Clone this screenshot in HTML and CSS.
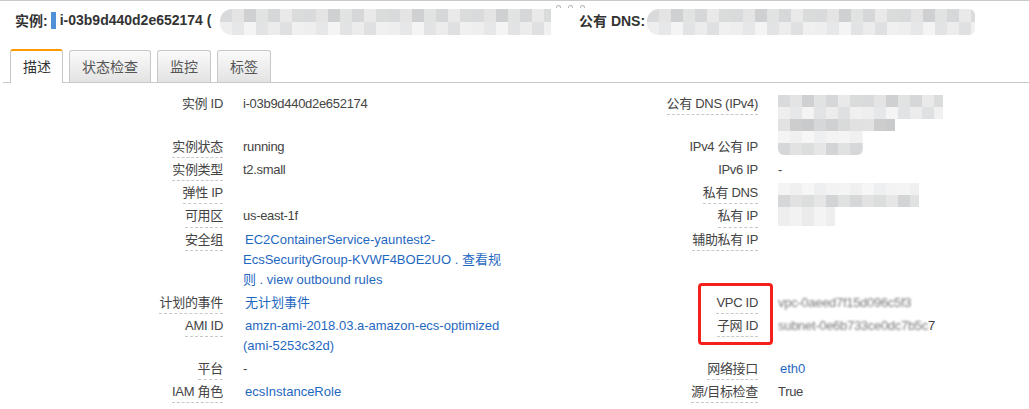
FILE: index.html
```html
<!DOCTYPE html>
<html lang="zh">
<head>
<meta charset="utf-8">
<title>实例详情</title>
<link rel="stylesheet" href="styles.css">
</head>
<body>
<div class="page">
  <header class="topbar">
    <div class="hdr-left">
      <span class="hdr-label">实例:</span>
      <span class="mark"></span>
      <span class="hdr-val">i-03b9d440d2e652174 (</span>
    </div>
    <div class="hdr-right">
      <span class="hdr-label">公有 DNS:</span>
    </div>
  </header>

  <nav class="tabs">
    <div class="tab active">描述</div>
    <div class="tab">状态检查</div>
    <div class="tab">监控</div>
    <div class="tab">标签</div>
  </nav>

  <section class="details">
    <div class="k"><span class="lbl plain">实例 ID</span></div>
    <div class="v">i-03b9d440d2e652174</div>
    <div class="k"><span class="lbl">公有 DNS (IPv4)</span></div>
    <div class="v two-line"></div>

    <div class="k"><span class="lbl">实例状态</span></div>
    <div class="v">running</div>
    <div class="k"><span class="lbl plain">IPv4 公有 IP</span></div>
    <div class="v"></div>

    <div class="k"><span class="lbl">实例类型</span></div>
    <div class="v">t2.small</div>
    <div class="k"><span class="lbl plain">IPv6 IP</span></div>
    <div class="v">-</div>

    <div class="k"><span class="lbl">弹性 IP</span></div>
    <div class="v"></div>
    <div class="k"><span class="lbl">私有 DNS</span></div>
    <div class="v"></div>

    <div class="k"><span class="lbl">可用区</span></div>
    <div class="v">us-east-1f</div>
    <div class="k"><span class="lbl">私有 IP</span></div>
    <div class="v"></div>

    <div class="k"><span class="lbl">安全组</span></div>
    <div class="v"><a class="lnk" href="#">EC2ContainerService-yauntest2-EcsSecurityGroup-KVWF4BOE2UO . 查看规则 . view outbound rules</a></div>
    <div class="k"><span class="lbl">辅助私有 IP</span></div>
    <div class="v"></div>

    <div class="k"><span class="lbl">计划的事件</span></div>
    <div class="v"><a class="lnk" href="#">无计划事件</a></div>
    <div class="k"><span class="lbl">VPC ID</span></div>
    <div class="v"><span class="smudge">vpc-0aeed7f15d096c5f3</span></div>

    <div class="k"><span class="lbl">AMI ID</span></div>
    <div class="v"><a class="lnk" href="#">amzn-ami-2018.03.a-amazon-ecs-optimized (ami-5253c32d)</a></div>
    <div class="k"><span class="lbl">子网 ID</span></div>
    <div class="v"><span class="smudge">subnet-0e6b733ce0dc7b5c</span>7</div>

    <div class="k"><span class="lbl">平台</span></div>
    <div class="v">-</div>
    <div class="k"><span class="lbl">网络接口</span></div>
    <div class="v"><a class="lnk" href="#">eth0</a></div>

    <div class="k"><span class="lbl">IAM 角色</span></div>
    <div class="v"><a class="lnk" href="#">ecsInstanceRole</a></div>
    <div class="k"><span class="lbl">源/目标检查</span></div>
    <div class="v">True</div>
  </section>

  <!-- obscured values and annotation overlays -->
  <div class="mosaic m-dl hdr-blur-1"></div>
  <div class="mosaic m-dl hdr-blur-2"></div>
  <div class="dots"><i></i><i></i><i></i></div>
  <div class="mosaic m-dl dns-a"></div>
  <div class="mosaic m-d dns-b"></div>
  <div class="mosaic m-ld ip-a"></div>
  <div class="mosaic m-ld pdns"></div>
  <div class="mosaic m-l pip"></div>
  <div class="annot"></div>
</div>
</body>
</html>
```

FILE: styles.css
```css
html, body {
  margin: 0;
  padding: 0;
  background: #fff;
  overflow: hidden;
}

body {
  font-family: "Liberation Sans", Arial, "Noto Sans CJK SC", sans-serif;
  color: #444;
}

.page {
  position: relative;
  width: 1029px;
  height: 409px;
  border-top: 1px solid #c9c9c9;
  box-sizing: border-box;
}

/* ---------- header ---------- */
.topbar {
  display: flex;
  align-items: center;
  height: 38px;
  font-size: 14px;
  font-weight: bold;
  color: #333;
}

.hdr-left {
  display: flex;
  align-items: center;
  width: 564px;
  padding-left: 15px;
  box-sizing: content-box;
}

.mark {
  display: inline-block;
  width: 5px;
  height: 17px;
  background: #4f90d6;
  margin-left: 3px;
  margin-right: 4px;
}

/* ---------- tabs ---------- */
.tabs {
  display: flex;
  align-items: flex-end;
  gap: 6px;
  margin: 10px 0 0 3px;
  padding-left: 7px;
  border-bottom: 1px solid #c9c9c9;
  height: 33px;
}

.tab {
  height: 32px;
  box-sizing: border-box;
  padding: 0 12px;
  border: 1px solid #c8c8c8;
  border-bottom: none;
  border-radius: 3px 3px 0 0;
  background: linear-gradient(#fafafa, #e3e3e3);
  font-size: 14px;
  line-height: 31px;
  color: #555;
  font-family: "Noto Sans CJK SC", "Liberation Sans", sans-serif;
}

.tab.active {
  height: 34px;
  margin-bottom: -1px;
  border-top: 2px solid #f90;
  background: #fff;
  color: #333;
  padding: 0 11px 0 12px;
  line-height: 31px;
}

/* ---------- detail grid ---------- */
.details {
  display: grid;
  grid-template-columns: 223px 265px 230px 1fr;
  column-gap: 20px;
  align-items: start;
  margin-top: 10px;
  font-size: 13px;
  letter-spacing: -0.3px;
  line-height: 20.3px;
}

.k, .v {
  padding: 1px 0;
  min-height: 21.3px;
}

.k {
  text-align: right;
  color: #444;
}

.lbl {
  display: inline-block;
  border-bottom: 1px dashed #c8c8c8;
}

.lbl.plain {
  border-bottom-color: transparent;
}

.v {
  color: #444;
}

.two-line {
  min-height: 40.6px;
}

.lnk {
  color: #1f68bf;
  text-decoration: none;
  margin-left: 2px;
  letter-spacing: 0;
}

.smudge {
  color: #7a7a7a;
  filter: blur(1.2px);
}

/* ---------- overlays ---------- */
.mosaic {
  position: absolute;
}

.m-dl {
  background:
    repeating-linear-gradient(90deg, #d9dadb 0 12px, #e4e4e4 12px 24px, #cfd0d1 24px 36px, #e1e2e2 36px 48px, #d5d7d8 48px 60px, #e9e9e9 60px 72px, #dadbdb 72px 84px) top left / 100% 50% no-repeat,
    repeating-linear-gradient(90deg, #eeeeee 0 12px, #e6e7e8 12px 24px, #f4f4f4 24px 36px, #e2e3e4 36px 48px, #ececec 48px 60px, #dfe0e1 60px 72px, #f0f0f0 72px 84px) bottom left / 100% 50% no-repeat;
}

.m-ld {
  background:
    repeating-linear-gradient(90deg, #f4f4f4 0 12px, #f0f0f1 12px 24px, #f6f6f6 24px 36px, #eeeff0 36px 48px, #f3f3f3 48px 60px) top left / 100% 50% no-repeat,
    repeating-linear-gradient(90deg, #d6d7d8 0 12px, #e2e2e3 12px 24px, #dcdddd 24px 36px, #e6e6e6 36px 48px, #d3d4d5 48px 60px, #e0e1e1 60px 72px) bottom left / 100% 50% no-repeat;
}

.m-d {
  background: repeating-linear-gradient(90deg, #e2e2e2 0 12px, #cdcdce 12px 24px, #c9cacb 24px 36px, #d5d7d8 36px 48px, #cfd0d1 48px 60px, #d9dada 60px 72px, #e1e1e1 72px 84px);
}

.m-l {
  background: repeating-linear-gradient(90deg, #eeeeee 0 12px, #f2f2f2 12px 24px, #ebebec 24px 36px, #f4f4f4 36px 48px);
}

.hdr-blur-1 {
  left: 220px;
  top: 8px;
  width: 331px;
  height: 26px;
  border-radius: 12px 0 0 12px;
}

.hdr-blur-2 {
  left: 647px;
  top: 8px;
  width: 328px;
  height: 26px;
  border-radius: 12px 6px 6px 12px;
}

.dots {
  position: absolute;
  left: 556px;
  top: 4px;
  display: flex;
  gap: 7px;
}

.dots i {
  display: block;
  width: 3px;
  height: 2px;
  border: 1px solid #bbb;
  border-bottom: none;
  border-radius: 3px 3px 0 0;
}

.dns-a { left: 778px; top: 94px;  width: 165px; height: 24px; }
.dns-b { left: 778px; top: 118px; width: 117px; height: 12px; }
.ip-a  { left: 778px; top: 130px; width: 85px;  height: 24px; border-radius: 0 0 6px 6px; }
.pdns  { left: 778px; top: 182px; width: 141px; height: 24px; }
.pip   { left: 778px; top: 206px; width: 57px;  height: 19px; }

.annot {
  position: absolute;
  left: 698px;
  top: 282px;
  width: 75px;
  height: 62px;
  box-sizing: border-box;
  border: 3px solid #f4201c;
  border-radius: 4px;
}
```
